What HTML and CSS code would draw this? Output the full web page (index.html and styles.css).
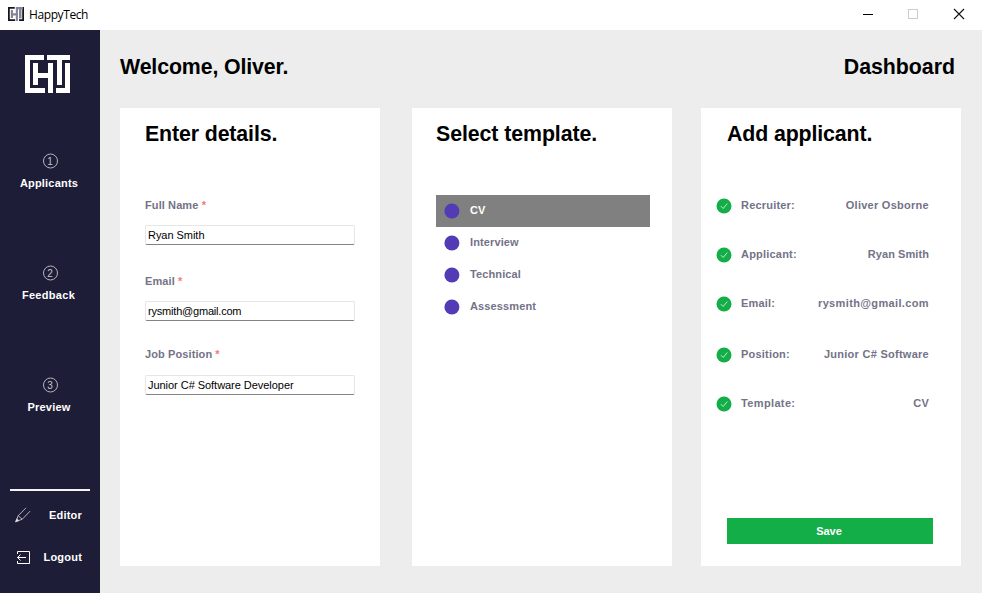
FILE: index.html
```html
<!DOCTYPE html>
<html lang="en">
<head>
<meta charset="utf-8">
<title>HappyTech</title>
<link rel="stylesheet" href="styles.css">
</head>
<body>
<svg class="defs" width="0" height="0" aria-hidden="true">
  <symbol id="logo" viewBox="0 0 45 38">
    <path d="M0 0H19V5H5V33H20V38H0ZM40 8H45V38H31V33H40Z"/>
    <path d="M8 8H13V18H23V8H28V38H23V23H13V30H8ZM22 0H45V5H37V30H32V5H22Z"/>
  </symbol>
  <symbol id="check" viewBox="0 0 16 16">
    <circle cx="8" cy="8" r="7.5" fill="#14ae48"/>
    <path d="M4.9 8.2L7.2 10.5L11.3 5.5" fill="none" stroke="#bfeacb" stroke-width="1"/>
  </symbol>
</svg>
<header class="titlebar">
  <svg class="app-icon" width="16" height="14" viewBox="0 0 45 38" preserveAspectRatio="none">
    <path class="frame" d="M0 0H19V5H5V33H20V38H0ZM40 0H45V38H31V33H40Z"/>
    <path class="inner" d="M8 8H14V17H22V5H28V38H22V23H14V30H8ZM22 0H42V6H38V31H31V6H22Z"/>
  </svg>
  <span class="app-name">HappyTech</span>
  <svg class="controls" width="122" height="30" fill="none">
    <path d="M3 14.5H13" stroke="#000"/>
    <rect x="48.5" y="9.5" width="9" height="9" stroke="#ccc"/>
    <path d="M94 9L104 19M104 9L94 19" stroke="#111" stroke-width="1.1"/>
  </svg>
</header>
<div class="shell">
  <nav class="sidebar">
    <svg class="logo" width="45" height="38"><use href="#logo"/></svg>
    <div class="steps">
      <a class="step"><span class="num">1</span><span>Applicants</span></a>
      <a class="step feedback"><span class="num">2</span><span>Feedback</span></a>
      <a class="step"><span class="num">3</span><span>Preview</span></a>
    </div>
    <div class="tools">
      <a class="tool"><svg width="16" height="16" fill="none" stroke="#c4c4cf" stroke-width=".9"><path d="M1 14.5L3.2 8.7L11 .8M1 14.5L7.2 12.3L15 4.2M3.2 8.7L7.2 12.3"/><path d="M.5 15L1.8 11.8L3.8 13.6Z" fill="#fff"/></svg><span>Editor</span></a>
      <a class="tool"><svg width="16" height="16" fill="none" stroke="#fff"><path d="M2.5 5V2.5H14.5V14.5H2.5V12M2.5 8.5H11M5.5 5.5L2.5 8.5L5.5 11.5"/></svg><span>Logout</span></a>
    </div>
  </nav>
  <main class="content">
    <div class="heading"><h1>Welcome, Oliver.</h1><h1 class="page">Dashboard</h1></div>
    <div class="cards">
      <section class="card details">
        <h2>Enter details.</h2>
        <label>Full Name <i>*</i></label>
        <div class="field">Ryan Smith</div>
        <label class="second">Email <i>*</i></label>
        <div class="field">rysmith@gmail.com</div>
        <label class="third">Job Position <i>*</i></label>
        <div class="field">Junior C# Software Developer</div>
      </section>
      <section class="card select">
        <h2>Select template.</h2>
        <ul class="templates">
          <li class="active"><span>CV</span></li>
          <li><span>Interview</span></li>
          <li><span>Technical</span></li>
          <li><span>Assessment</span></li>
        </ul>
      </section>
      <section class="card summary">
        <h2>Add applicant.</h2>
        <div class="rows">
          <div class="row"><svg width="16" height="16"><use href="#check"/></svg><span>Recruiter:</span><b>Oliver Osborne</b></div>
          <div class="row"><svg width="16" height="16"><use href="#check"/></svg><span>Applicant:</span><b class="tight">Ryan Smith</b></div>
          <div class="row wide"><svg width="16" height="16"><use href="#check"/></svg><span>Email:</span><b class="loose">rysmith@gmail.com</b></div>
          <div class="row"><svg width="16" height="16"><use href="#check"/></svg><span>Position:</span><b>Junior C# Software</b></div>
          <div class="row"><svg width="16" height="16"><use href="#check"/></svg><span class="loose">Template:</span><b>CV</b></div>
        </div>
        <button class="save">Save</button>
      </section>
    </div>
  </main>
</div>
</body>
</html>
```
FILE: styles.css
```css
* { box-sizing: border-box; }
body {
  margin: 0; width: 982px; height: 593px; overflow: hidden;
  display: flex; flex-direction: column;
  font: bold 11px/16px "Liberation Sans", Arial, sans-serif;
  letter-spacing: .2px; color: #737387; background: #ededed;
}
.defs { position: absolute; }
.titlebar {
  height: 30px; flex: none; display: flex; align-items: center;
  padding-left: 8px; background: #fff; color: #000;
}
.app-icon { margin-top: -2px; }
.app-icon .frame { fill: #16161c; }
.app-icon .inner { fill: #85859a; }
.app-name {
  margin-left: 5px; letter-spacing: -.4px;
  font: 12px/28px "Open Sans", "Noto Sans", sans-serif;
}
.controls { margin-left: auto; }
.shell { flex: 1; display: flex; }
.sidebar {
  width: 100px; flex: none; display: flex; flex-direction: column;
  padding-top: 25px; background: #1e1d38; color: #fff;
}
.logo { margin-left: 25px; fill: #fff; }
.steps { display: flex; flex-direction: column; gap: 74px; margin-top: 60px; }
.step {
  height: 38px; display: flex; flex-direction: column;
  align-items: center; gap: 7px; padding-right: 2px;
}
.feedback { letter-spacing: .3px; padding-right: 3px; }
.num {
  width: 15px; height: 15px; margin: 0 0 0 2px;
  transform: translateY(.5px);
  border: 1px solid #b4b4c0; border-radius: 50%;
  color: #c4c4cf; font: 10px/13px "Liberation Sans", sans-serif;
  letter-spacing: 0; text-align: center;
}
.feedback .num { margin-left: 3px; }
.tools {
  margin: 74px 10px 0; border-top: 2px solid #f4f4f6;
  padding: 16px 8px 0 5px;
}
.tool { display: flex; justify-content: space-between; align-items: center; margin-bottom: 26px; }
.content { flex: 1; min-width: 0; padding: 24px 21px 0 20px; }
h1, h2 { margin: 0; color: #000; font-size: 21.33px; line-height: 26px; letter-spacing: -.12px; }
h1.page { letter-spacing: -.02px; }
.heading { display: flex; justify-content: space-between; padding-right: 6px; }
.cards { display: grid; grid-template-columns: 260px 260px 260px; column-gap: 32px; margin-top: 28px; }
.card { height: 458px; padding: 13px 22px 22px 24px; background: #fff; }
.card.details { padding: 13px 25px 0; }
.select h2 { letter-spacing: -.08px; }
label { display: block; margin-top: 50px; letter-spacing: .1px; }
label i { color: #f4777b; font-style: normal; }
label.second { margin-top: 28px; }
label.third { margin-top: 25px; }
.field {
  height: 20px; margin-top: 12px; padding-left: 2px;
  border: 1px solid #e6e6e6; border-bottom-color: #838383; border-radius: 2px;
  color: #000; font-weight: normal; line-height: 19px; letter-spacing: -.04px;
}
.second + .field { letter-spacing: -.2px; }
label.third + .field { margin-top: 13px; }
.templates { list-style: none; margin: 48px 0 0; padding: 0; }
.templates li { height: 32px; display: flex; align-items: center; gap: 10px; padding-left: 8px; letter-spacing: .12px; }
.templates li span { margin-bottom: 2px; }
.templates li::before { content: ""; width: 15px; height: 15px; margin-right: 1px; border-radius: 50%; background: #523bb5; transform: translate(.4px, -.5px); }
.templates .active { background: #808080; color: #fff; }
.summary { display: flex; flex-direction: column; width: 260px; margin-left: -3px; padding: 13px 28px 22px 26px; }
.rows { margin: 50px 4px 0 -11px; }
.row { display: flex; align-items: center; height: 16px; margin-bottom: 33px; }
.row.wide { margin-bottom: 35px; }
.row svg { margin-top: 2px; }
.row span { margin-left: 9px; }
.row b { margin-left: auto; letter-spacing: .27px; }
.row b.tight { letter-spacing: .07px; }
.row b.loose, .row span.loose { letter-spacing: .36px; }
.save {
  height: 26px; margin-top: auto; border: 0; padding: 0 2px 0 0;
  background: #14ae48; color: #fff; font: inherit; letter-spacing: 0;
}
```
